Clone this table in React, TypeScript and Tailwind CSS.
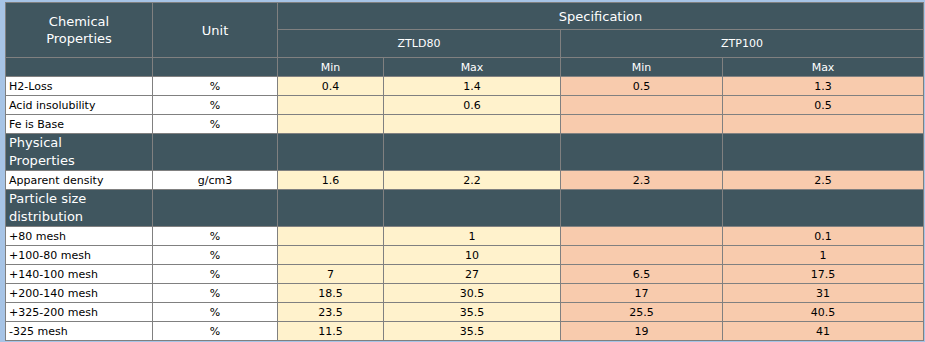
import React from "react";

type Row = { name: React.ReactNode; unit?: string; vals?: string[]; section?: boolean };

const rows: Row[] = [
  { name: "H2-Loss", unit: "%", vals: ["0.4", "1.4", "0.5", "1.3"] },
  { name: "Acid insolubility", unit: "%", vals: ["", "0.6", "", "0.5"] },
  { name: "Fe is Base", unit: "%", vals: ["", "", "", ""] },
  { name: <>Physical<br />Properties</>, section: true },
  { name: "Apparent density", unit: "g/cm3", vals: ["1.6", "2.2", "2.3", "2.5"] },
  { name: <>Particle size<br />distribution</>, section: true },
  { name: "+80 mesh", unit: "%", vals: ["", "1", "", "0.1"] },
  { name: "+100-80 mesh", unit: "%", vals: ["", "10", "", "1"] },
  { name: "+140-100 mesh", unit: "%", vals: ["7", "27", "6.5", "17.5"] },
  { name: "+200-140 mesh", unit: "%", vals: ["18.5", "30.5", "17", "31"] },
  { name: "+325-200 mesh", unit: "%", vals: ["23.5", "35.5", "25.5", "40.5"] },
  { name: "-325 mesh", unit: "%", vals: ["11.5", "35.5", "19", "41"] },
];

const bd = "border border-[#808080]";
const hd = `${bd} bg-[#40565f] text-white`;

export default function App() {
  return (
    <div className="w-[925px] h-[342px] bg-[#a7c4e6] pt-[2px] pl-[5px] overflow-hidden" style={{ fontFamily: '"DejaVu Sans", Verdana, sans-serif' }}>
      <table className="border-collapse table-fixed w-[918px] text-[11px] leading-[13px] text-black">
        <colgroup>
          <col className="w-[147px]" />
          <col className="w-[125px]" />
          <col className="w-[106px]" />
          <col className="w-[177px]" />
          <col className="w-[162px]" />
          <col className="w-[201px]" />
        </colgroup>
        <tbody>
          <tr className="h-[27px]">
            <td rowSpan={2} className={`${hd} text-center text-[13px] leading-[17px]`}>Chemical<br />Properties</td>
            <td rowSpan={2} className={`${hd} text-center text-[13px]`}>Unit</td>
            <td colSpan={4} className={`${hd} text-center text-[13px]`}>Specification</td>
          </tr>
          <tr className="h-[28px]">
            <td colSpan={2} className={`${hd} text-center text-[11px]`}>ZTLD80</td>
            <td colSpan={2} className={`${hd} text-center text-[11px]`}>ZTP100</td>
          </tr>
          <tr className="h-[19px]">
            <td className={hd}></td>
            <td className={hd}></td>
            <td className={`${hd} text-center`}>Min</td>
            <td className={`${hd} text-center`}>Max</td>
            <td className={`${hd} text-center`}>Min</td>
            <td className={`${hd} text-center`}>Max</td>
          </tr>
          {rows.map((r, i) =>
            r.section ? (
              <tr key={i} className="h-[37px]">
                <td className={`${hd} text-[13px] leading-[18px] pl-[3px] text-left`}>{r.name}</td>
                <td className={hd}></td>
                <td className={hd}></td>
                <td className={hd}></td>
                <td className={hd}></td>
                <td className={hd}></td>
              </tr>
            ) : (
              <tr key={i} className="h-[19px]">
                <td className={`${bd} bg-white pl-[3px] text-left whitespace-nowrap`}>{r.name}</td>
                <td className={`${bd} bg-white text-center`}>{r.unit}</td>
                <td className={`${bd} bg-[#fff2cc] text-center`}>{r.vals![0]}</td>
                <td className={`${bd} bg-[#fff2cc] text-center`}>{r.vals![1]}</td>
                <td className={`${bd} bg-[#f8cbad] text-center`}>{r.vals![2]}</td>
                <td className={`${bd} bg-[#f8cbad] text-center`}>{r.vals![3]}</td>
              </tr>
            )
          )}
        </tbody>
      </table>
    </div>
  );
}
